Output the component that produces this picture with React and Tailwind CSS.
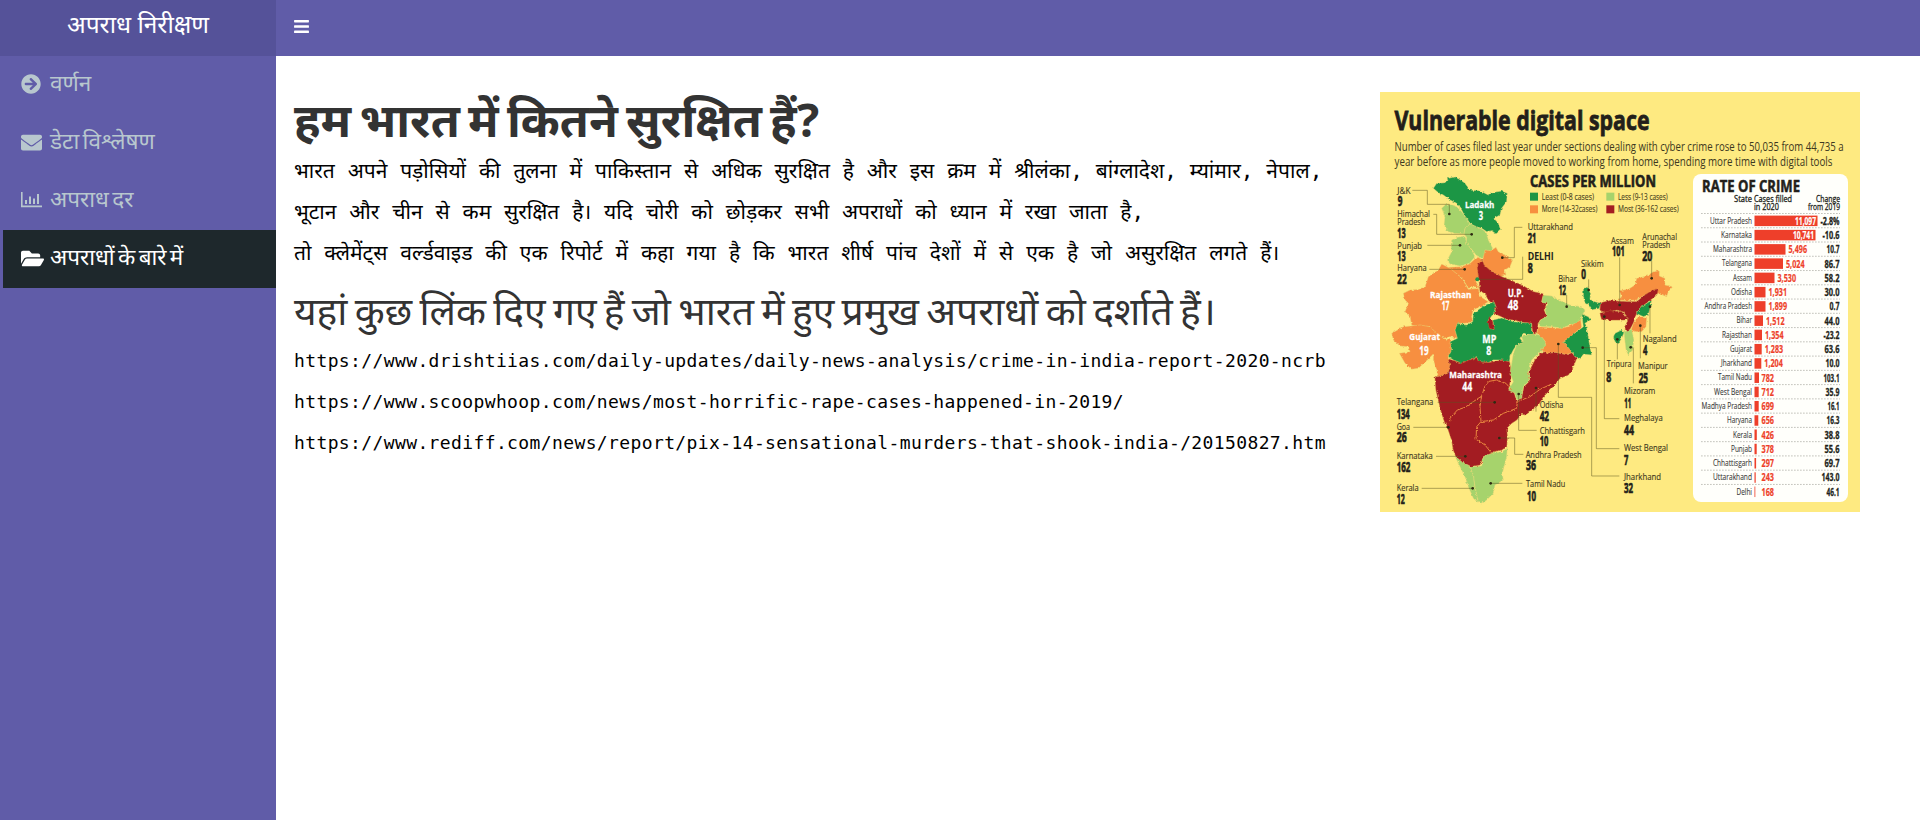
import React from "react";
import { FaArrowCircleRight, FaEnvelope, FaFolderOpen, FaBars } from "react-icons/fa";

const GREEN = "#1e9645";
const LIGHT = "#a6d36c";
const ORANGE = "#f78f3f";
const RED = "#a31d21";

const regions = [
  [GREEN, "190,85 200,70 225,68 235,55 255,50 275,62 285,70 300,90 330,92 355,105 370,97 395,93 412,100 410,125 395,145 390,165 372,175 385,190 392,210 378,222 365,212 350,215 335,205 315,200 300,190 285,170 275,150 260,130 240,120 220,105 205,98"],
  [LIGHT, "215,145 228,133 245,135 260,140 275,155 290,175 300,192 285,205 282,222 255,220 235,215 222,195 225,170"],
  [LIGHT, "282,222 285,205 300,192 320,200 340,210 350,220 355,240 368,265 350,280 335,295 318,285 305,268 288,250 290,232"],
  [LIGHT, "245,240 262,232 285,228 290,250 305,270 315,290 298,310 270,318 240,312 232,300 245,275 243,255"],
  [ORANGE, "235,322 270,320 298,312 322,290 338,300 325,325 327,350 318,365 330,385 315,380 295,385 280,360 265,345 245,335"],
  [ORANGE, "345,270 362,272 378,262 385,275 400,283 428,300 420,320 405,330 408,345 390,350 365,335 340,320 338,300"],
  [RED, "336,298 342,315 365,335 395,350 425,362 455,375 490,395 520,402 515,425 530,430 522,450 530,470 510,480 503,495 500,522 488,515 485,490 460,488 435,480 410,478 395,470 372,460 378,440 355,420 345,400 330,395 328,370 325,345 322,320"],
  [ORANGE, "100,400 120,390 150,388 165,380 175,350 205,330 215,312 240,325 265,345 280,362 295,388 325,385 332,410 355,425 340,435 310,450 305,470 310,485 285,490 265,490 258,505 262,525 265,535 240,530 220,535 195,520 180,500 150,505 125,495 120,470 105,455 115,430 105,420"],
  [ORANGE, "65,520 100,500 150,495 180,500 195,515 220,535 245,540 245,575 235,590 240,615 235,640 205,650 200,630 190,600 190,582 170,602 145,625 125,628 105,610 88,580 120,575 115,560 90,558 70,540"],
  [GREEN, "310,460 345,435 372,425 378,440 370,462 355,480 360,505 372,508 368,480 395,474 430,485 485,490 485,515 497,525 480,525 460,520 450,535 460,548 440,555 430,570 420,590 418,605 395,600 370,600 355,608 325,605 320,590 300,600 275,610 250,600 235,590 245,570 240,545 262,535 255,510 262,490 290,495 308,485"],
  [RED, "358,470 366,480 373,508 358,505 354,488"],
  [RED, "195,650 205,650 235,640 240,615 235,597 275,610 320,592 325,605 355,608 395,601 418,605 425,640 420,665 415,690 430,690 440,725 458,700 462,680 480,662 475,640 490,610 500,590 520,575 555,575 590,582 605,578 620,595 608,625 595,645 570,655 545,685 520,710 505,735 480,755 465,765 455,762 440,780 425,790 410,805 412,830 410,860 395,870 370,875 360,885 340,890 330,915 300,920 275,910 258,890 250,870 245,840 235,810 225,790 215,760 205,720 198,690"],
  [LIGHT, "455,530 480,522 515,525 530,550 520,570 500,585 485,600 478,622 475,640 480,660 460,680 455,715 440,720 435,700 415,690 430,665 420,640 425,610 430,580 440,555 460,548"],
  [LIGHT, "520,405 545,408 565,420 600,435 635,440 645,450 635,470 632,490 600,495 575,505 545,500 515,500 505,490 512,480 530,470 525,450 533,432 515,425"],
  [ORANGE, "505,500 545,503 575,505 600,498 632,480 635,500 620,515 605,530 590,540 605,555 612,575 590,584 555,577 530,580 515,570 530,550 515,530 500,520"],
  [GREEN, "635,462 655,470 662,480 645,490 650,505 655,530 660,560 665,585 640,583 630,598 615,590 605,575 580,545 600,530 620,515 640,500"],
  [GREEN, "640,385 655,380 662,400 660,418 675,425 692,430 688,445 665,450 655,435 645,430 640,410"],
  [LIGHT, "255,888 275,905 300,918 310,945 315,980 325,1030 310,1015 295,980 285,950 270,920"],
  [LIGHT, "300,920 335,918 340,890 365,880 395,875 412,865 410,890 405,910 397,940 400,960 375,975 370,1000 350,1020 335,1032 325,1025 315,980 310,945"],
  [ORANGE, "745,420 755,410 748,392 775,388 795,375 800,355 830,348 850,335 868,332 868,348 885,355 885,375 908,380 895,395 890,410 865,400 845,415 825,405 800,420 770,422"],
  [RED, "692,428 720,422 770,425 800,425 825,405 845,392 865,386 860,405 835,425 810,445 795,470 790,490 775,515 762,505 770,490 775,475 760,455 740,450 705,458 690,450"],
  [RED, "690,460 720,452 755,455 775,478 760,480 720,480 695,478"],
  [GREEN, "798,460 815,440 845,420 840,445 835,465 820,470"],
  [ORANGE, "790,490 805,470 830,475 828,500 815,515 795,515 783,510"],
  [LIGHT, "762,515 785,508 792,540 788,570 775,585 768,570 765,545"],
  [GREEN, "735,520 755,510 762,518 755,535 745,552 735,545 730,530"],
];

const borders = [
  "238,792 240,775 262,750 285,742 310,725 335,708 345,678 357,664 380,660 408,670 425,690",
  "335,708 330,740 333,785 320,800 318,838 345,855 365,880",
  "333,785 370,780 400,760 440,745 442,725 480,710 510,688 545,672",
];

const leaders = [
  "127,91 172,91 172,133 238,133 238,162",
  "190,163 200,163 200,223 305,223",
  "172,256 270,256",
  "178,328 284,328",
  "457,202 433,202 433,293 397,293",
  "458,290 458,358 325,358",
  "590,405 590,440",
  "656,358 656,390",
  "749,292 749,435",
  "845,302 845,355",
  "840,520 840,440",
  "811,595 811,500",
  "790,670 790,565 782,560",
  "742,598 742,538",
  "748,776 703,776 703,470",
  "748,866 679,866 679,563 638,563",
  "748,948 665,948 665,712 565,712 565,552",
  "203,727 374,727",
  "130,802 235,802",
  "198,889 286,889",
  "155,985 308,985",
  "498,755 498,684",
  "500,811 446,811 446,702",
  "460,883 434,883 434,834 388,834",
  "457,970 362,970",
];

const dots = [
  [238, 162], [305, 223], [270, 256], [284, 328], [397, 293], [590, 440], [656, 390], [749, 435], [845, 355],
  [840, 440], [811, 497], [782, 562], [742, 538], [703, 470], [638, 563], [565, 552], [374, 727], [235, 802],
  [286, 889], [308, 985], [498, 684], [446, 702], [388, 834], [362, 970],
];

/* [text, x, baseline, width] */
const names = [
  ["J&K", 82, 101, 40], ["Himachal", 82, 172, 98], ["Pradesh", 82, 195, 84], ["Punjab", 82, 266, 74], ["Haryana", 82, 334, 88],
  ["Uttarakhand", 473, 209, 136], ["Bihar", 565, 366, 55], ["Sikkim", 633, 322, 68], ["Assam", 723, 251, 69],
  ["Arunachal", 817, 240, 104], ["Pradesh", 817, 263, 84], ["Nagaland", 818, 545, 102], ["Tripura", 710, 622, 75],
  ["Manipur", 804, 628, 89], ["Mizoram", 762, 701, 94], ["Meghalaya", 762, 783, 116], ["West Bengal", 762, 874, 132],
  ["Jharkhand", 762, 960, 111], ["Telangana", 80, 736, 110], ["Goa", 80, 811, 40], ["Karnataka", 80, 897, 108],
  ["Kerala", 80, 993, 66], ["Odisha", 509, 745, 71], ["Chhattisgarh", 509, 821, 136], ["Andhra Pradesh", 467, 894, 168],
  ["Tamil Nadu", 468, 981, 118],
];

const values = [
  ["9", 83, 138, 14], ["13", 82, 233, 25], ["13", 82, 303, 25], ["22", 82, 372, 28], ["21", 473, 249, 26], ["8", 473, 340, 15],
  ["12", 566, 404, 22], ["0", 634, 357, 14], ["101", 726, 289, 38], ["20", 817, 302, 30], ["4", 819, 586, 13], ["8", 709, 666, 15],
  ["25", 806, 670, 28], ["11", 763, 743, 21], ["44", 762, 824, 30], ["7", 762, 914, 13], ["32", 762, 1000, 27],
  ["134", 80, 776, 39], ["26", 80, 847, 30], ["162", 80, 937, 41], ["12", 80, 1033, 24], ["42", 509, 782, 28], ["10", 509, 857, 26],
  ["36", 468, 929, 30], ["10", 471, 1023, 27],
];

const whites = [
  ["Ladakh", 285, 144, 88, 27], ["3", 326, 181, 13, 38], ["Rajasthan", 180, 414, 124, 27], ["17", 215, 450, 23, 38],
  ["U.P.", 413, 411, 48, 29], ["48", 413, 449, 32, 40], ["Gujarat", 118, 541, 92, 27], ["19", 148, 584, 28, 38],
  ["MP", 337, 550, 42, 29], ["8", 349, 585, 15, 38], ["Maharashtra", 238, 653, 158, 27], ["44", 277, 692, 30, 38],
];

/* [state, cases, change, bar width] */
const rates = [
  ["Uttar Pradesh", "11,097", "-2.8%", 63], ["Karnataka", "10,741", "-10.6", 61], ["Maharashtra", "5,496", "10.7", 31],
  ["Telangana", "5,024", "86.7", 28.5], ["Assam", "3,530", "58.2", 20], ["Odisha", "1,931", "30.0", 11],
  ["Andhra Pradesh", "1,899", "0.7", 11], ["Bihar", "1,512", "44.0", 8.5], ["Rajasthan", "1,354", "-23.2", 7.5],
  ["Gujarat", "1,283", "63.6", 7.2], ["Jharkhand", "1,204", "10.0", 6.8], ["Tamil Nadu", "782", "103.1", 4.5],
  ["West Bengal", "712", "35.9", 4.2], ["Madhya Pradesh", "699", "16.1", 4.2], ["Haryana", "656", "16.3", 3.8],
  ["Kerala", "426", "38.8", 2.3], ["Punjab", "378", "55.6", 2.2], ["Chhattisgarh", "297", "69.7", 1.6],
  ["Uttarakhand", "243", "143.0", 1.2], ["Delhi", "168", "46.1", 0.8],
];
const stateWidths = [42, 31, 39, 30, 19, 21, 47.5, 15.5, 30, 22, 31, 34, 38, 50.5, 25, 19, 21, 39, 39, 15.5];
const changeWidths = [19, 17, 13, 15, 15, 15, 10, 15, 16, 15, 14, 16, 14, 12, 13, 15, 15, 15, 18, 13];

function Label({ t, x, y, w, s, bold, fill, stroke }) {
  return (
    <text
      x={x} y={y} textLength={w} lengthAdjust="spacingAndGlyphs" fontSize={s} fill={fill}
      fontWeight={bold ? 700 : 400} stroke={stroke ? fill : "none"} strokeWidth={stroke || 0}
    >
      {t}
    </text>
  );
}

function Legend({ x, y, color, t, w }) {
  return (
    <g>
      <rect x={x} y={y} width="24" height="24" fill={color} />
      <Label t={t} x={x + 35} y={y + 21} w={w} s={27} fill="#4a431f" stroke={0.4} />
    </g>
  );
}

function CrimeMap() {
  return (
    <g transform="translate(-10 68) scale(0.33333)">
      <filter id="coast" x="-5%" y="-5%" width="110%" height="110%">
        <feTurbulence type="fractalNoise" baseFrequency="0.12" numOctaves="2" seed="4" />
        <feDisplacementMap in="SourceGraphic" scale="9" xChannelSelector="R" yChannelSelector="G" />
      </filter>
      <Label t="CASES PER MILLION" x={480} y={82} w={378} s={46} bold fill="#231f1a" stroke={1.8} />
      <Legend x={480} y={98} color={GREEN} t="Least (0-8 cases)" w={157} />
      <Legend x={709} y={98} color={LIGHT} t="Less (9-13 cases)" w={149} />
      <Legend x={480} y={136} color={ORANGE} t="More (14-32cases)" w={167} />
      <Legend x={709} y={136} color={RED} t="Most (36-162 cases)" w={182} />
      <g filter="url(#coast)">
        {regions.map(([c, p], i) => (
          <polygon key={i} points={p} fill={c} stroke={c === RED ? "#b9582f" : "#e8d878"} strokeWidth="1.5" strokeLinejoin="round" />
        ))}
        {borders.map((p) => (
          <polyline key={p} points={p} fill="none" stroke="#e8853f" strokeWidth="3" strokeLinejoin="round" />
        ))}
      </g>
      <circle cx="322" cy="358" r="6" fill={GREEN} />
      {leaders.map((p) => (
        <polyline key={p} points={p} fill="none" stroke="#5c5420" strokeOpacity="0.75" strokeWidth="2" />
      ))}
      {dots.map(([x, y], i) => <circle key={i} cx={x} cy={y} r="4" fill="#2e2a12" />)}
      {names.map(([t, x, y, w], i) => <Label key={i} t={t} x={x} y={y} w={w} s={27} fill="#3d3820" stroke={0.4} />)}
      <Label t="DELHI" x={473} y={301} w={78} s={30} bold fill="#231f1a" />
      {values.map(([t, x, y, w], i) => <Label key={i} t={t} x={x} y={y} w={w} s={41} bold fill="#231f1a" stroke={2} />)}
      {whites.map(([t, x, y, w, s], i) => <Label key={i} t={t} x={x} y={y} w={w} s={s} bold fill="#fff" stroke={0.8} />)}
    </g>
  );
}

function RateChart() {
  return (
    <g>
      <rect x="313" y="82" width="155" height="328" rx="8" fill="#fffffb" />
      <Label t="RATE OF CRIME" x={322} y={99.5} w={98} s={15.5} bold fill="#231f1a" stroke={0.5} />
      <Label t="State" x={354} y={110} w={18} s={8.8} fill="#231f1a" stroke={0.3} />
      <Label t="Cases filled" x={374} y={110} w={38} s={8.8} fill="#231f1a" stroke={0.3} />
      <Label t="in 2020" x={374} y={118} w={25} s={8.8} fill="#231f1a" stroke={0.3} />
      <Label t="Change" x={436} y={110} w={24} s={8.8} fill="#231f1a" stroke={0.3} />
      <Label t="from 2019" x={428} y={118} w={32} s={8.8} fill="#231f1a" stroke={0.3} />
      {rates.map(([state, cases, change, bar], i) => {
        const y = 128.6 + i * 14.26;
        const inside = i < 2;
        const cw = cases.length === 6 ? 21 : cases.length === 5 ? 18.5 : 12.5;
        const cx = inside ? 374.5 + bar - cw - 1.5 : cases.length === 3 ? 381.5 : 374.5 + bar + 3;
        return (
          <g key={state}>
            <line x1="321" x2="460" y1={y - 7.1} y2={y - 7.1} stroke="#b5b5ad" strokeWidth="0.8" strokeDasharray="1.7 1.3" />
            <Label t={state} x={372 - stateWidths[i]} y={y + 3} w={stateWidths[i]} s={9} fill="#3a3a38" stroke={0.1} />
            <rect x="374.5" y={y - 5} width={bar} height="10.5" fill="#ee3f2a" />
            <Label t={cases} x={cx} y={y + 4.2} w={cw} s={11.4} bold fill={inside ? "#fff" : "#ee3f2a"} stroke={0.2} />
            <Label t={change} x={459.5 - changeWidths[i]} y={y + 4.2} w={changeWidths[i]} s={11.4} bold fill="#231f1a" stroke={0.3} />
          </g>
        );
      })}
    </g>
  );
}

function Infographic() {
  return (
    <svg viewBox="0 0 480 420" className="block h-[420px] w-[480px] shrink-0 font-['Open_Sans',sans-serif]">
      <rect width="480" height="420" fill="#feea81" />
      <Label t="Vulnerable digital space" x={14.5} y={38} w={255} s={27.5} bold fill="#231f1a" stroke={0.8} />
      <Label t="Number of cases filed last year under sections dealing with cyber crime rose to 50,035 from 44,735 a" x={14.5} y={59} w={449} s={13.5} fill="#3d3820" />
      <Label t="year before as more people moved to working from home, spending more time with digital tools" x={14.5} y={74.3} w={438} s={13.5} fill="#3d3820" />
      <CrimeMap />
      <RateChart />
    </svg>
  );
}

function ChartIcon() {
  return (
    <svg viewBox="0 0 21 16" className="h-4 w-[21px]" fill="currentColor">
      <path d="M0 0h1.6v13.6H21V15.200H0zM4 8h2v4H4zM8 4.500h2V12H8zM12 6.500h2V12h-2zM16 2h2v10h-2z" />
    </svg>
  );
}

const menu = [
  { icon: <FaArrowCircleRight className="h-5 w-5" />, label: "वर्णन" },
  { icon: <FaEnvelope className="h-[21px] w-[21px]" />, label: "डेटा विश्लेषण" },
  { icon: <ChartIcon />, label: "अपराध दर" },
  { icon: <FaFolderOpen className="h-[23px] w-[23px]" />, label: "अपराधों के बारे में", active: true },
];

const paragraph = [
  ["भारत अपने पड़ोसियों की तुलना में पाकिस्तान से अधिक सुरक्षित है और इस क्रम में श्रीलंका, बांग्लादेश, म्यांमार, नेपाल,", "[word-spacing:0.25px]"],
  ["भूटान और चीन से कम सुरक्षित है। यदि चोरी को छोड़कर सभी अपराधों को ध्यान में रखा जाता है,", "[word-spacing:0.2px]"],
  ["तो क्लेमेंट्स वर्ल्डवाइड की एक रिपोर्ट में कहा गया है कि भारत शीर्ष पांच देशों में से एक है जो असुरक्षित लगते हैं।", "[word-spacing:0.3px]"],
];

const links = [
  "https://www.drishtiias.com/daily-updates/daily-news-analysis/crime-in-india-report-2020-ncrb",
  "https://www.scoopwhoop.com/news/most-horrific-rape-cases-happened-in-2019/",
  "https://www.rediff.com/news/report/pix-14-sensational-murders-that-shook-india-/20150827.htm",
];

export default function App() {
  return (
    <div className="flex h-[820px] w-[1920px] overflow-hidden bg-white font-['Noto_Sans',sans-serif]">
      <aside className="flex w-[276px] shrink-0 flex-col bg-[#605ca8]">
        <div className="flex h-14 items-center justify-center bg-[#555299] pb-2 text-[24.5px] text-white">अपराध निरीक्षण</div>
        <nav className="flex flex-col">
          {menu.map((m) => (
            <a
              key={m.label}
              className={
                m.active
                  ? "flex h-[58px] items-center border-l-[3px] border-[#605ca8] bg-[#1e282c] pb-0.5 pl-[18px] text-[22.5px] text-white"
                  : "flex h-[58px] items-center border-l-[3px] border-transparent pb-0.5 pl-[18px] text-[22.5px] text-[#b8c7ce]"
              }
            >
              <span className="flex w-[29px] shrink-0 items-center">{m.icon}</span>
              <span className="whitespace-nowrap pb-[3px] [word-spacing:-2.5px]">{m.label}</span>
            </a>
          ))}
        </nav>
      </aside>
      <div className="flex grow flex-col">
        <header className="flex h-14 shrink-0 items-center bg-[#605ca8] pb-1 pl-[18px] text-white">
          <FaBars className="h-[17px] w-[15px]" />
        </header>
        <main className="flex items-start pt-9 pl-[18px]">
          <section className="flex w-[1086px] shrink-0 flex-col whitespace-nowrap">
            <h1 className="flex h-[59px] items-center pb-1 text-[47px] font-bold text-[#333] [word-spacing:-4px]">हम भारत में कितने सुरक्षित हैं?</h1>
            <div className="flex flex-col font-['DejaVu_Sans_Mono','Noto_Sans',monospace] text-[21px] text-black">
              {paragraph.map(([t, c]) => (
                <p key={t} className="h-[41px] leading-[41px]"><span className={c}>{t}</span></p>
              ))}
            </div>
            <h2 className="flex h-[66px] items-center pt-[7px] text-[39px] text-[#333] [word-spacing:-2.8px]">यहां कुछ लिंक दिए गए हैं जो भारत में हुए प्रमुख अपराधों को दर्शाते हैं।</h2>
            <div className="flex flex-col font-['DejaVu_Sans_Mono',monospace] text-[18px] tracking-[0.38px] text-black">
              {links.map((l) => <p key={l} className="h-[41px] leading-[41px]">{l}</p>)}
            </div>
          </section>
          <Infographic />
        </main>
      </div>
    </div>
  );
}
